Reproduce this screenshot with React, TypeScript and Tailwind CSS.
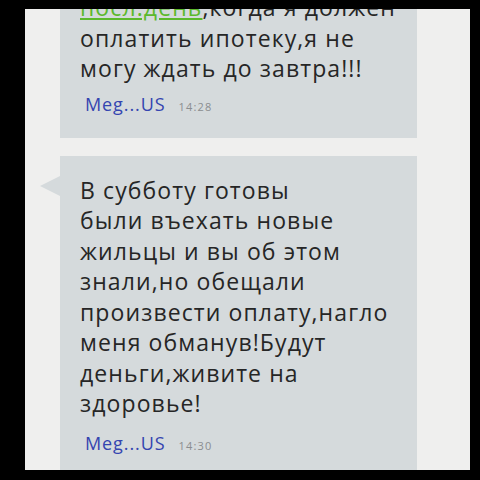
import React from "react";

const font = { fontFamily: "'Open Sans', Roboto, 'Noto Sans', sans-serif" };

function Meta({ time, mt }: { time: string; mt: string }) {
  return (
    <div className={`flex items-baseline pl-[5px] leading-[20px] ${mt}`}>
      <span className="text-[18px] tracking-[0.9px] text-[#3445b0]">Meg...US</span>
      <span className="ml-[13px] text-[11px] tracking-[1.2px] text-[#8a8d90]">{time}</span>
    </div>
  );
}

export default function App() {
  return (
    <div className="w-[480px] h-[480px] bg-black pt-[9px] pl-[25px]" style={font}>
      <div className="w-[445px] h-[461px] bg-[#efefee] overflow-hidden pl-[35px]">
        <div className="flex flex-col gap-[18px] -mt-[37px]">
          <div className="relative w-[357px] bg-[#d5dadc] pt-[20px] pl-[20px] pb-[21px]">
            <div className="text-[23px] font-medium leading-[30.5px] tracking-[1.1px] text-[#262626] whitespace-nowrap">
              <span className="text-[#5cb82c] underline">посл.день</span>,когда я должен
              <br />
              оплатить ипотеку,я не
              <br />
              могу ждать до завтра!!!
            </div>
            <Meta time="14:28" mt="mt-[10px]" />
          </div>
          <div className="relative w-[357px] bg-[#d5dadc] pt-[19px] pl-[20px] pb-[40px]">
            <div className="absolute left-[-20px] top-[20px] w-0 h-0 border-y-[10px] border-y-transparent border-r-[20px] border-r-[#d5dadc]" />
            <div className="text-[23px] font-medium leading-[30.5px] tracking-[1.1px] text-[#262626] whitespace-nowrap">
              В субботу готовы
              <br />
              были въехать новые
              <br />
              жильцы и вы об этом
              <br />
              знали,но обещали
              <br />
              произвести оплату,нагло
              <br />
              меня обманув!Будут
              <br />
              деньги,живите на
              <br />
              здоровье!
            </div>
            <Meta time="14:30" mt="mt-[14px]" />
          </div>
        </div>
      </div>
    </div>
  );
}
